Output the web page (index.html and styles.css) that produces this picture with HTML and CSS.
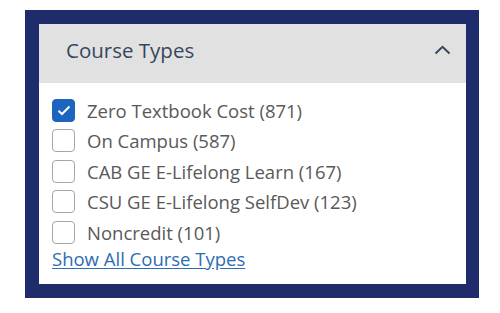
FILE: index.html
```html
<!DOCTYPE html>
<html>
<head>
<meta charset="utf-8">
<link rel="stylesheet" href="styles.css">
</head>
<body>
<div class="frame">
  <div class="panel">
    <div class="header">
      <span class="title">Course Types</span>
      <svg class="chev" width="17" height="10" viewBox="0 0 17 10"><path d="M1.5 8.5 L8.5 1.8 L15.5 8.5" fill="none" stroke="#34475f" stroke-width="2"/></svg>
    </div>
    <div class="body">
      <ul class="list">
        <li class="row"><span class="box checked"><svg width="14" height="11" viewBox="0 0 14 11"><path d="M1.5 5.8 L5 9 L12.5 1.5" fill="none" stroke="#fff" stroke-width="2"/></svg></span><span class="label">Zero Textbook Cost (871)</span></li>
        <li class="row"><span class="box"></span><span class="label">On Campus (587)</span></li>
        <li class="row"><span class="box"></span><span class="label">CAB GE E-Lifelong Learn (167)</span></li>
        <li class="row"><span class="box"></span><span class="label">CSU GE E-Lifelong SelfDev (123)</span></li>
        <li class="row"><span class="box"></span><span class="label">Noncredit (101)</span></li>
      </ul>
      <a class="more" href="#">Show All Course Types</a>
    </div>
  </div>
</div>
</body>
</html>
```
FILE: styles.css
```css
html, body { margin: 0; padding: 0; background: #fff; }
body { font-family: "Open Sans", "DejaVu Sans", sans-serif; }
.frame {
  margin: 10px 0 0 25px;
  width: 454px;
  height: 288px;
  box-sizing: border-box;
  border: 14px solid #1f2c6b;
  border-right-width: 13px;
  background: #fff;
}
.panel { display: flex; flex-direction: column; height: 100%; }
.header {
  height: 59px;
  box-sizing: border-box;
  background: #e1e1e1;
  display: flex;
  align-items: center;
  justify-content: space-between;
  padding: 0 15px 7px 27px;
  flex: none;
}
.title { font-size: 20.5px; color: #34475f; }
.chev { display: block; margin-top: -1px; }
.body { padding: 12px 0 0 13px; }
.list { list-style: none; margin: 0; padding: 0; }
.row { display: flex; align-items: center; height: 30.5px; }
.box {
  width: 21px; height: 21px;
  border: 1px solid #a6a6a6;
  border-radius: 4px;
  background: #fff;
  display: flex; align-items: center; justify-content: center;
  flex: none;
}
.box.checked { background: #1b64c0; border-color: #1b64c0; }
.label { margin-left: 12px; font-size: 18.5px; color: #595959; white-space: nowrap; }
.more {
  display: inline-block;
  font-size: 18.5px;
  line-height: 21px;
  color: #2e6cb3;
  text-decoration: underline;
  text-underline-offset: 2px;
}
```
